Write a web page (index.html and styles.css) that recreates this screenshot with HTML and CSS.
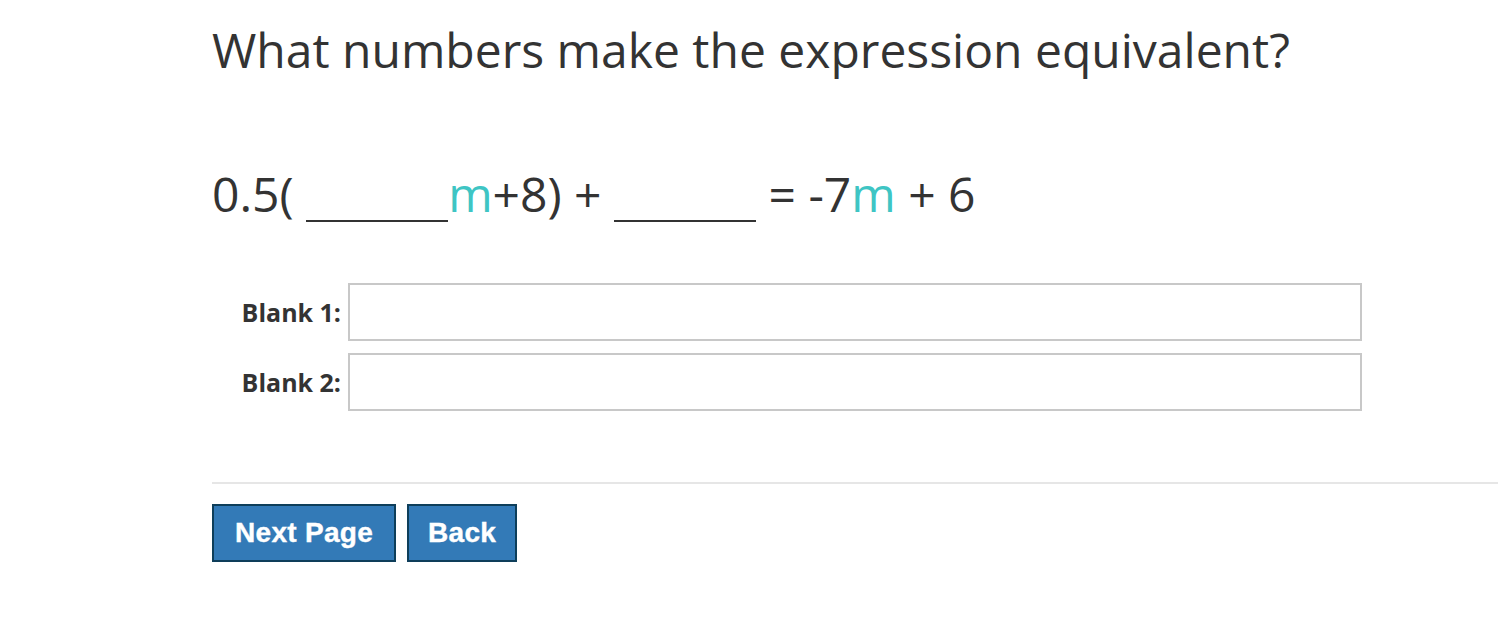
FILE: index.html
```html
<!DOCTYPE html>
<html>
<head>
<meta charset="utf-8">
<link rel="stylesheet" href="styles.css">
</head>
<body>
<div class="page">
  <h1 class="title">What numbers make the expression equivalent?</h1>
  <div class="equation">0.5( <span class="blank"></span><span class="var">m</span>+8) + <span class="blank"></span> = -7<span class="var">m</span> + 6</div>
  <div class="fields">
    <div class="field"><label class="label">Blank 1:</label><input class="input" type="text"></div>
    <div class="field"><label class="label">Blank 2:</label><input class="input" type="text"></div>
  </div>
  <hr class="rule">
  <div class="buttons">
    <button class="btn">Next Page</button>
    <button class="btn btn-back">Back</button>
  </div>
</div>
</body>
</html>
```

FILE: styles.css
```css
html, body { margin: 0; padding: 0; background: #fff; }
body { font-family: "Open Sans", sans-serif; color: #333; }
.page { padding-left: 212px; padding-top: 20px; }
.title { font-size: 48px; font-weight: 400; margin: 0; line-height: 60px; color: #333; }
.equation { font-size: 48px; margin-top: 84px; line-height: 60px; white-space: pre; }
.blank { display: inline-block; width: 142px; border-bottom: 2px solid #333; height: 40px; vertical-align: -10px; }
.var { color: #3ec5c4; }
.fields { margin-top: 59px; display: flex; flex-direction: column; gap: 12px; }
.field { display: flex; align-items: center; }
.label { width: 136px; text-align: right; font-weight: 700; font-size: 25px; padding-right: 7px; box-sizing: border-box; }
.input { width: 1014px; height: 58px; box-sizing: border-box; border: 2px solid #c8c8c8; margin: 0; padding: 0 8px; font-size: 20px; }
.rule { border: 0; border-top: 2px solid #e6e6e6; margin: 71px 0 0 0; }
.buttons { display: flex; gap: 11px; margin-top: 20px; }
.btn { font-family: "Liberation Sans", Arial, sans-serif; font-weight: 700; font-size: 28px; letter-spacing: 0.3px; color: #fff; background: #337ab7; border: 2px solid #0e3e5a; height: 58px; padding: 0 21px; margin: 0; -webkit-text-stroke: 0.4px #fff; }
.btn-back { padding: 0 19px; }
```
